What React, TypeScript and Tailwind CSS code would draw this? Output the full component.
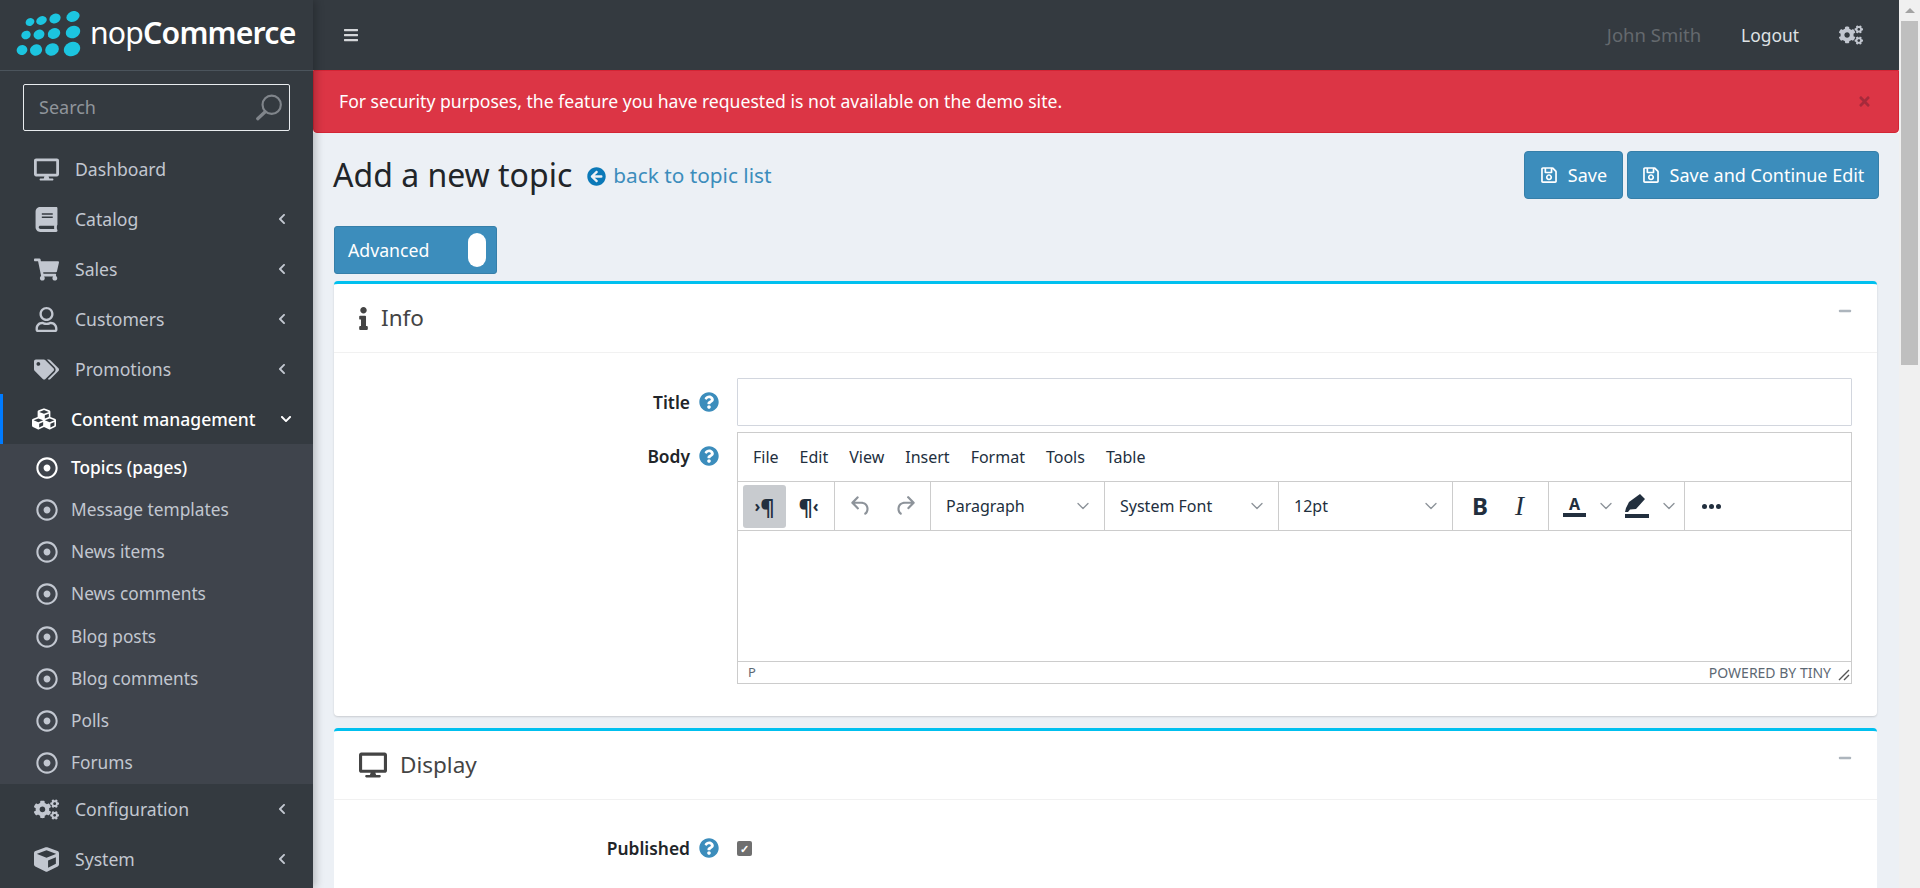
import type { ReactNode } from "react";
import { ChevronDown } from "lucide-react";
import {
  FaArrowCircleLeft,
  FaBars,
  FaBook,
  FaChevronDown,
  FaChevronLeft,
  FaCogs,
  FaCube,
  FaCubes,
  FaDesktop,
  FaInfo,
  FaMinus,
  FaQuestionCircle,
  FaRegDotCircle,
  FaRegSave,
  FaRegUser,
  FaShoppingCart,
  FaTags,
  FaTimes,
} from "react-icons/fa";

const topMenu = [
  { label: "Dashboard", icon: FaDesktop },
  { label: "Catalog", icon: FaBook, arrow: true },
  { label: "Sales", icon: FaShoppingCart, arrow: true },
  { label: "Customers", icon: FaRegUser, arrow: true },
  { label: "Promotions", icon: FaTags, arrow: true },
];

const subMenu = [
  "Topics (pages)",
  "Message templates",
  "News items",
  "News comments",
  "Blog posts",
  "Blog comments",
  "Polls",
  "Forums",
];

const bottomMenu = [
  { label: "Configuration", icon: FaCogs },
  { label: "System", icon: FaCube },
];

const editorMenu = ["File", "Edit", "View", "Insert", "Format", "Tools", "Table"];

function Logo() {
  return (
    <svg width="66" height="48" viewBox="0 0 66 48" className="shrink-0">
      <g fill="#1cc5e0">
        <ellipse cx="14" cy="11" rx="4.5" ry="3.8" transform="rotate(-25 14 11)" />
        <ellipse cx="25.5" cy="9.5" rx="5.5" ry="4.2" transform="rotate(-25 25.5 9.5)" />
        <ellipse cx="39" cy="7.5" rx="5.8" ry="4.8" transform="rotate(-25 39 7.5)" />
        <ellipse cx="57" cy="5.5" rx="6.8" ry="5.2" transform="rotate(-25 57 5.5)" />
        <ellipse cx="10" cy="24" rx="4.8" ry="4.2" transform="rotate(-25 10 24)" />
        <ellipse cx="23" cy="23.5" rx="5.6" ry="4.8" transform="rotate(-25 23 23.5)" />
        <ellipse cx="38" cy="22.5" rx="6.4" ry="5.2" transform="rotate(-25 38 22.5)" />
        <ellipse cx="57" cy="21" rx="7.4" ry="6" transform="rotate(-25 57 21)" />
        <ellipse cx="6" cy="39" rx="5.4" ry="5" transform="rotate(-25 6 39)" />
        <ellipse cx="20" cy="39" rx="6.2" ry="5.6" transform="rotate(-25 20 39)" />
        <ellipse cx="36" cy="38.5" rx="7" ry="6" transform="rotate(-25 36 38.5)" />
        <ellipse cx="56" cy="38" rx="8.4" ry="7" transform="rotate(-25 56 38)" />
      </g>
    </svg>
  );
}

function SearchGlass() {
  return (
    <svg width="28" height="28" viewBox="0 0 26 26" fill="none" stroke="#80858b">
      <circle cx="15.5" cy="10" r="8.5" strokeWidth="2" />
      <path d="M9.5 16.5 2.5 23" strokeWidth="3" strokeLinecap="round" />
    </svg>
  );
}

function Sidebar() {
  return (
    <aside className="relative z-10 flex h-[888px] w-[313px] shrink-0 flex-col bg-[#343a40] text-[#c2c7d0] shadow-[3px_0_8px_rgba(0,0,0,0.22)]">
      <div className="flex h-[71px] items-center gap-[8px] border-b border-[#4b545c] pl-[16px]">
        <Logo />
        <span className="pb-[4px] text-[30.2px] leading-none tracking-[-0.8px] text-white">
          <span>nop</span>
          <span className="font-semibold">Commerce</span>
        </span>
      </div>

      <div className="px-[23px] pb-[13px] pt-[13px]">
        <div className="flex h-[47px] items-center justify-between rounded-[2px] border border-[#e9ecef] pl-[15px] pr-[6px] text-[18px] text-[#90959b]">
          <span>Search</span>
          <SearchGlass />
        </div>
      </div>

      <nav className="flex flex-1 flex-col">
        {topMenu.map((item) => (
          <div key={item.label} className="flex h-[50px] items-center pl-[34px] pr-[25px] text-[17.6px]">
            <span className="flex w-[41px] items-center">
              <item.icon className="text-[25px]" />
            </span>
            <span>{item.label}</span>
            {item.arrow && <FaChevronLeft className="ml-auto text-[12px]" />}
          </div>
        ))}

        <div className="flex h-[50px] items-center border-l-[3px] border-[#007bff] pl-[29px] pr-[21px] text-[17.5px] font-medium text-white">
          <span className="flex w-[39px] items-center">
            <FaCubes className="text-[24px]" />
          </span>
          <span>Content management</span>
          <FaChevronDown className="ml-auto text-[12px]" />
        </div>

        <div className="flex h-[340px] flex-col justify-around bg-[#3f444c] pt-[3px]">
          {subMenu.map((item, i) => (
            <div
              key={item}
              className={
                i === 0
                  ? "flex items-center pl-[36px] text-[17.3px] font-medium text-white"
                  : "flex items-center pl-[36px] text-[17.3px]"
              }
            >
              <span className="flex w-[35px] items-center">
                <FaRegDotCircle className="text-[22px]" />
              </span>
              <span>{item}</span>
            </div>
          ))}
        </div>

        {bottomMenu.map((item) => (
          <div key={item.label} className="flex h-[50px] items-center pl-[34px] pr-[25px] text-[17.6px]">
            <span className="flex w-[41px] items-center">
              <item.icon className="text-[25px]" />
            </span>
            <span>{item.label}</span>
            <FaChevronLeft className="ml-auto text-[12px]" />
          </div>
        ))}
      </nav>
    </aside>
  );
}

function TopBar() {
  return (
    <header className="flex h-[70px] shrink-0 items-center bg-[#343a40] pl-[30px] pr-[36px] text-[17.4px]">
      <FaBars className="text-[16px] text-[#d5d7da]" />
      <span className="ml-auto text-[18.5px] text-[#64696e]">John Smith</span>
      <span className="ml-[40px] text-[#dfe2e5]">Logout</span>
      <FaCogs className="ml-[40px] text-[24px] text-[#c2c7d0]" />
    </header>
  );
}

function HelpIcon() {
  return <FaQuestionCircle className="shrink-0 text-[20px] text-[#3c8dbc]" />;
}

function Chevron({ className }: { className: string }) {
  return <ChevronDown size={20} strokeWidth={1.6} className={className} />;
}

function Editor() {
  return (
    <div className="flex h-[252px] flex-col border border-[#ccc] bg-white text-[#222f3e]">
      <div className="flex h-[48px] items-center gap-[21px] pl-[15px] text-[16px]">
        {editorMenu.map((m) => (
          <span key={m}>{m}</span>
        ))}
      </div>

      <div className="flex h-[50px] items-stretch border-y border-[#ccc]">
        <div className="flex w-[97px] items-center gap-[1px] border-r border-[#ccc] pl-[5px]">
          <span className="flex h-[43px] w-[43px] items-center justify-center rounded-[3px] bg-[#c8cbcf] text-[22px] font-bold">
            <span className="text-[16px] font-bold leading-none">›</span>¶
          </span>
          <span className="flex h-[43px] w-[43px] items-center justify-center text-[22px] font-bold">
            ¶<span className="text-[16px] font-bold leading-none">‹</span>
          </span>
        </div>
        <div className="flex w-[96px] items-center justify-center gap-[18px] border-r border-[#ccc] text-[#8d939a]">
          <svg width="26" height="26" viewBox="0 0 24 24" fill="currentColor">
            <path d="M6.4 8H12c3.7 0 6.2 2 6.8 5.1.6 2.7-.4 5.6-2.3 6.8a1 1 0 0 1-1-1.8c1.1-.6 1.8-2.7 1.4-4.6-.5-2.1-2.1-3.5-4.9-3.5H6.4l3.3 3.3a1 1 0 1 1-1.4 1.4l-5-5a1 1 0 0 1 0-1.4l5-5a1 1 0 0 1 1.4 1.4L6.4 8Z" />
          </svg>
          <svg width="26" height="26" viewBox="0 0 24 24" fill="currentColor">
            <path d="M17.6 10H12c-2.8 0-4.4 1.4-4.9 3.5-.4 2 .3 4 1.4 4.6a1 1 0 1 1-1 1.8c-2-1.2-2.9-4.1-2.3-6.8.6-3 3-5.1 6.8-5.1h5.6l-3.3-3.3a1 1 0 1 1 1.4-1.4l5 5a1 1 0 0 1 0 1.4l-5 5a1 1 0 0 1-1.4-1.4l3.3-3.3Z" />
          </svg>
        </div>
        <div className="flex w-[174px] items-center border-r border-[#ccc] pl-[15px] pr-[11px] text-[16px]">
          Paragraph
          <Chevron className="ml-auto text-[#8d939a]" />
        </div>
        <div className="flex w-[174px] items-center border-r border-[#ccc] pl-[15px] pr-[11px] text-[16px]">
          System Font
          <Chevron className="ml-auto text-[#8d939a]" />
        </div>
        <div className="flex w-[174px] items-center border-r border-[#ccc] pl-[15px] pr-[11px] text-[16px]">
          12pt
          <Chevron className="ml-auto text-[#8d939a]" />
        </div>
        <div className="flex w-[96px] items-center border-r border-[#ccc] pl-[19px] text-[24px] leading-none">
          <span className="font-bold">B</span>
          <span className="ml-[27px] font-['Liberation_Serif',serif] text-[27px] italic">I</span>
        </div>
        <div className="flex w-[136px] items-center border-r border-[#ccc] pl-[14px]">
          <span className="flex w-[23px] flex-col items-center">
            <span className="text-[16px] font-bold leading-[17px]">A</span>
            <span className="h-[4px] w-[23px] bg-[#222f3e]" />
          </span>
          <Chevron className="ml-[10px] text-[#8d939a]" />
          <svg width="24" height="26" viewBox="0 0 24 26" className="ml-[9px]" fill="#222f3e">
            <path d="M1 15l3-6L15 1l5 5-9 10-6 .5L3 19H0z" />
            <rect y="21" width="24" height="4" />
          </svg>
          <Chevron className="ml-[10px] text-[#8d939a]" />
        </div>
        <div className="flex items-center gap-[2px] pl-[17px]">
          <span className="h-[5px] w-[5px] rounded-full bg-[#222f3e]" />
          <span className="h-[5px] w-[5px] rounded-full bg-[#222f3e]" />
          <span className="h-[5px] w-[5px] rounded-full bg-[#222f3e]" />
        </div>
      </div>

      <div className="flex-1" />

      <div className="relative flex h-[22px] items-center border-t border-[#ccc] pl-[10px] pr-[20px] text-[14px] text-[#5d6873]">
        <span className="text-[13px]">P</span>
        <span className="ml-auto">POWERED BY TINY</span>
        <svg width="12" height="12" viewBox="0 0 12 12" className="absolute bottom-[2px] right-[1px]" stroke="#555" fill="none">
          <path d="M1 11 11 1M6 11l5-5" strokeWidth="1.4" />
        </svg>
      </div>
    </div>
  );
}

function CardHead({ icon, title }: { icon: ReactNode; title: string }) {
  return (
    <div className="flex h-[69px] items-center border-b border-[#f1f1f1] pl-[25px] pr-[25px] text-[#444]">
      <span className="flex items-center">{icon}</span>
      <span className="text-[22.5px]">{title}</span>
      <FaMinus className="ml-auto -mt-[15px] text-[14px] text-[#adb5bd]" />
    </div>
  );
}

function FormLabel({ text }: { text: string }) {
  return (
    <div className="flex h-full w-[403px] shrink-0 items-center justify-end gap-[9px] pr-[18px] text-[17.4px] font-semibold text-[#212529]">
      <span>{text}</span>
      <HelpIcon />
    </div>
  );
}

function Content() {
  return (
    <main className="flex-1 overflow-hidden bg-[#ecf0f5] pl-[21px] pr-[22px]">
      <div className="flex h-[93px] items-start pt-[18px]">
        <h1 className="-ml-[1px] text-[32px] leading-[48px] text-[#212529]">Add a new topic</h1>
        <a className="ml-[15px] flex h-[48px] items-center gap-[7px] pt-[2px] text-[20.8px] text-[#3c8dbc]">
          <FaArrowCircleLeft className="text-[19px] text-[#0b79b8]" />
          back to topic list
        </a>
        <div className="-mr-[2px] ml-auto flex gap-[4px]">
          <button className="flex h-[48px] w-[99px] items-center justify-center gap-[10px] rounded-[4px] border border-[#367fa9] bg-[#3c8dbc] text-[18px] text-white">
            <FaRegSave className="text-[18px]" />
            Save
          </button>
          <button className="flex h-[48px] w-[252px] items-center justify-center gap-[10px] rounded-[4px] border border-[#367fa9] bg-[#3c8dbc] text-[18px] text-white">
            <FaRegSave className="text-[18px]" />
            Save and Continue Edit
          </button>
        </div>
      </div>

      <div className="flex h-[48px] w-[163px] items-center justify-between rounded-[3px] border border-[#367fa9] bg-[#3c8dbc] pl-[13px] pr-[10px] text-[17.7px] text-white">
        Advanced
        <span className="h-[34px] w-[18px] rounded-full bg-white" />
      </div>

      <section className="mt-[7px] h-[435px] rounded-[4px] border-t-[3px] border-[#00c0ef] bg-white shadow-[0_1px_2px_rgba(0,0,0,0.15)]">
        <CardHead icon={<FaInfo className="-ml-[7px] mr-[6px] text-[23px] text-[#444]" />} title="Info" />
        <div className="mt-[25px] flex h-[48px]">
          <FormLabel text="Title" />
          <div className="h-[48px] w-[1115px] rounded-[1px] border border-[#d2d6de] bg-white" />
        </div>
        <div className="mt-[6px] flex">
          <div className="h-[48px]">
            <FormLabel text="Body" />
          </div>
          <div className="w-[1115px]">
            <Editor />
          </div>
        </div>
      </section>

      <section className="mt-[12px] rounded-[4px] border-t-[3px] border-[#00c0ef] bg-white pb-[60px]">
        <CardHead icon={<FaDesktop className="mr-[13px] text-[28px] text-[#444]" />} title="Display" />
        <div className="mt-[36px] flex h-[24px] items-center">
          <FormLabel text="Published" />
          <span className="flex h-[15px] w-[15px] items-center justify-center rounded-[2px] bg-[#6f6f6f] text-[11px] font-bold leading-none text-white">
            ✓
          </span>
        </div>
      </section>
    </main>
  );
}

export default function App() {
  return (
    <div className="flex h-[888px] w-[1920px] overflow-hidden bg-white font-['Noto_Sans',sans-serif]">
      <Sidebar />
      <div className="flex w-[1586px] flex-col">
        <TopBar />
        <div className="flex h-[63px] shrink-0 items-center justify-between rounded-b-[4px] border border-[#d32535] bg-[#dc3545] pl-[25px] pr-[26px] text-[17.6px] text-white">
          <span>For security purposes, the feature you have requested is not available on the demo site.</span>
          <FaTimes className="text-[15px] text-[#a62a3b]" />
        </div>
        <Content />
      </div>
      {/* page scrollbar */}
      <div className="flex w-[21px] flex-col items-center bg-[#f0f0f0] pl-[2px] pr-[2px]">
        <span className="mt-[8px] h-0 w-0 border-x-[5px] border-b-[5px] border-x-transparent border-b-[#a3a3a3]" />
        <span className="mt-[8px] h-[344px] w-full bg-[#bfbfbf]" />
      </div>
    </div>
  );
}
